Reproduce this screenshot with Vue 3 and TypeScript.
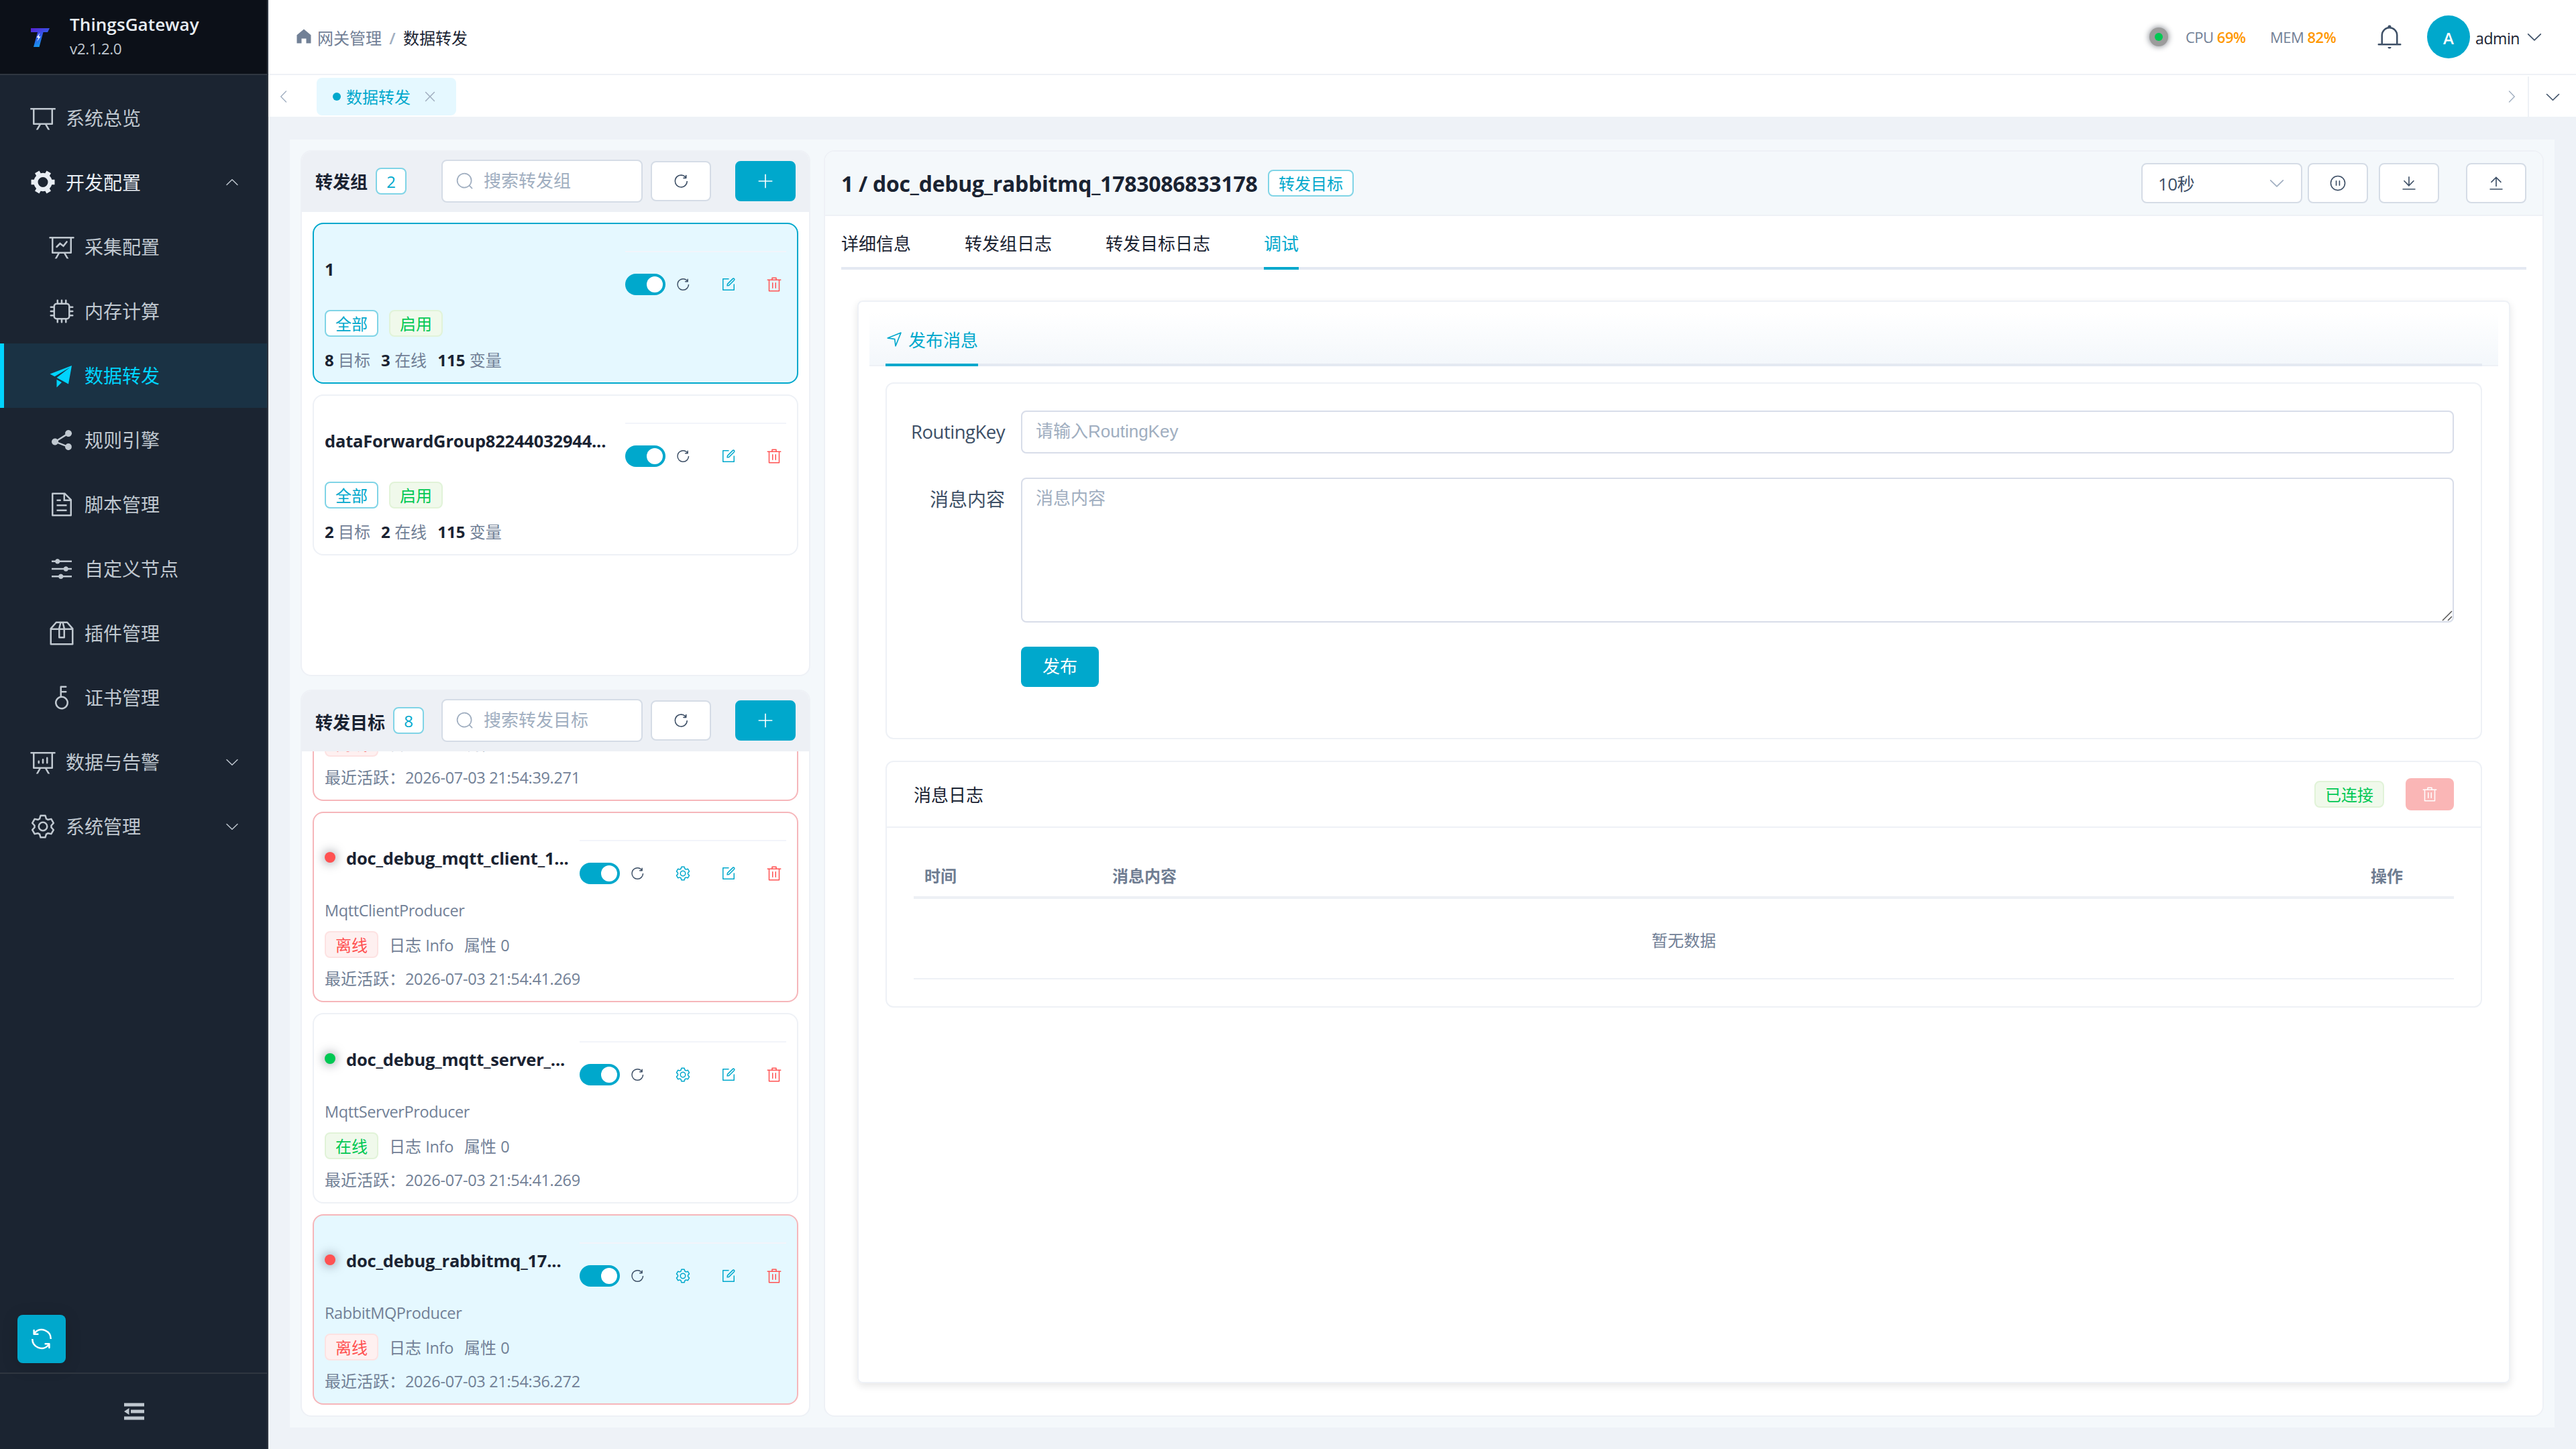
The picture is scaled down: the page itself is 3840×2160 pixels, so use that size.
<script setup lang="ts">
import { h, type FunctionalComponent } from 'vue'

const iconPaths: Record<string, string> = {
  dataBoard:
    'M32 128h960v64H32z M192 192v512h640V192zm-64-64h768v608a32 32 0 0 1-32 32H160a32 32 0 0 1-32-32z M322.176 960H248.32l144.64-250.56 55.424 32zm453.888 0h-73.856L576 741.44l55.424-32z',
  tools:
    'M764.416 254.72a351.68 351.68 0 0 1 86.336 149.184H960v192.064H850.752a351.68 351.68 0 0 1-86.336 149.312l54.72 94.72-166.272 96-54.592-94.72a352.64 352.64 0 0 1-172.48 0L371.136 936l-166.272-96 54.72-94.72a351.68 351.68 0 0 1-86.336-149.312H64v-192h109.248a351.68 351.68 0 0 1 86.336-149.312L204.8 160l166.208-96h.192l54.656 94.592a352.64 352.64 0 0 1 172.48 0L652.8 64h.128L819.2 160l-54.72 94.72zM704 499.968a192 192 0 1 0-384 0 192 192 0 0 0 384 0',
  dataLine:
    'M359.168 768H160a32 32 0 0 1-32-32V192H64a32 32 0 0 1 0-64h896a32 32 0 1 1 0 64h-64v544a32 32 0 0 1-32 32H665.216l110.848 192h-73.856L591.36 768H433.024L322.176 960H248.32zM832 192H192v512h640zM342.656 534.656a32 32 0 1 1-45.312-45.312L444.992 341.76l125.44 94.08L679.04 300.032a32 32 0 1 1 49.92 39.936L581.632 524.224 451.008 426.24z',
  cpu:
    'M320 256a64 64 0 0 0-64 64v384a64 64 0 0 0 64 64h384a64 64 0 0 0 64-64V320a64 64 0 0 0-64-64zm0-64h384a128 128 0 0 1 128 128v384a128 128 0 0 1-128 128H320a128 128 0 0 1-128-128V320a128 128 0 0 1 128-128 M512 64a32 32 0 0 1 32 32v128h-64V96a32 32 0 0 1 32-32m160 0a32 32 0 0 1 32 32v128h-64V96a32 32 0 0 1 32-32m-320 0a32 32 0 0 1 32 32v128h-64V96a32 32 0 0 1 32-32m160 896a32 32 0 0 1-32-32V800h64v128a32 32 0 0 1-32 32m160 0a32 32 0 0 1-32-32V800h64v128a32 32 0 0 1-32 32m-320 0a32 32 0 0 1-32-32V800h64v128a32 32 0 0 1-32 32M64 512a32 32 0 0 1 32-32h128v64H96a32 32 0 0 1-32-32m0-160a32 32 0 0 1 32-32h128v64H96a32 32 0 0 1-32-32m0 320a32 32 0 0 1 32-32h128v64H96a32 32 0 0 1-32-32m896-160a32 32 0 0 1-32 32H800v-64h128a32 32 0 0 1 32 32m0-160a32 32 0 0 1-32 32H800v-64h128a32 32 0 0 1 32 32m0 320a32 32 0 0 1-32 32H800v-64h128a32 32 0 0 1 32 32',
  promotion: 'm64 448 832-320-128 704-446.08-243.328L832 192 242.816 545.472zm256 512V657.024L512 768z',
  share:
    'm679.872 348.8-301.76 188.608a127.8 127.8 0 0 1 5.12 52.16l279.936 104.96a128 128 0 1 1-22.464 59.904l-279.872-104.96a128 128 0 1 1-16.64-166.272l301.696-188.608a128 128 0 1 1 33.92 54.272z',
  document:
    'M832 384H576V128H192v768h640zm-26.496-64L640 154.496V320zM160 64h480l256 256v608a32 32 0 0 1-32 32H160a32 32 0 0 1-32-32V96a32 32 0 0 1 32-32m160 448h384v64H320zm0-192h160v64H320zm0 384h384v64H320z',
  operation:
    'M389.44 768a96.064 96.064 0 0 1 181.12 0H896v64H570.56a96.064 96.064 0 0 1-181.12 0H128v-64zm192-288a96.064 96.064 0 0 1 181.12 0H896v64H762.56a96.064 96.064 0 0 1-181.12 0H128v-64zm-320-288a96.064 96.064 0 0 1 181.12 0H896v64H442.56a96.064 96.064 0 0 1-181.12 0H128v-64z',
  box:
    'M317.056 128 128 344.064V896h768V344.064L706.944 128zm-14.528-64h418.944a32 32 0 0 1 24.064 10.88l206.528 236.096A32 32 0 0 1 960 332.032V928a32 32 0 0 1-32 32H96a32 32 0 0 1-32-32V332.032a32 32 0 0 1 7.936-21.12L278.4 75.008A32 32 0 0 1 302.528 64 M64 320h896v64H64z M448 327.872V640h128V327.872L526.08 128h-28.16zM448 64h128l64 256v352a32 32 0 0 1-32 32H416a32 32 0 0 1-32-32V320z',
  key:
    'M448 456.064V96a32 32 0 0 1 32-32.064L672 64a32 32 0 0 1 0 64H512v128h160a32 32 0 0 1 0 64H512v128a256 256 0 1 1-64 8.064M512 896a192 192 0 1 0 0-384 192 192 0 0 0 0 384',
  dataAnalysis:
    'm665.216 768 110.848 192h-73.856L591.36 768H433.024L322.176 960H248.32l110.848-192H160a32 32 0 0 1-32-32V192H64a32 32 0 0 1 0-64h896a32 32 0 1 1 0 64h-64v544a32 32 0 0 1-32 32zM832 192H192v512h640zM352 448a32 32 0 0 1 32 32v64a32 32 0 0 1-64 0v-64a32 32 0 0 1 32-32m160-64a32 32 0 0 1 32 32v128a32 32 0 0 1-64 0V416a32 32 0 0 1 32-32m160-64a32 32 0 0 1 32 32v192a32 32 0 1 1-64 0V352a32 32 0 0 1 32-32',
  setting:
    'M600.704 64a32 32 0 0 1 30.464 22.208l35.2 109.376c14.784 7.232 28.928 15.36 42.432 24.512l112.384-24.192a32 32 0 0 1 34.432 15.36L944.32 364.8a32 32 0 0 1-4.032 37.504l-77.12 85.12a357 357 0 0 1 0 49.024l77.12 85.248a32 32 0 0 1 4.032 37.504l-88.704 153.6a32 32 0 0 1-34.432 15.296L708.8 803.904c-13.44 9.088-27.648 17.28-42.368 24.512l-35.264 109.376A32 32 0 0 1 600.704 960H423.296a32 32 0 0 1-30.464-22.208L357.696 828.48a352 352 0 0 1-42.56-24.64l-112.32 24.256a32 32 0 0 1-34.432-15.36L79.68 659.2a32 32 0 0 1 4.032-37.504l77.12-85.248a357 357 0 0 1 0-48.896l-77.12-85.248A32 32 0 0 1 79.68 364.8l88.704-153.6a32 32 0 0 1 34.432-15.296l112.32 24.256c13.568-9.152 27.776-17.408 42.56-24.64l35.2-109.312A32 32 0 0 1 423.232 64H600.64zm-23.424 64H446.72l-36.352 113.088-24.512 11.968a294 294 0 0 0-34.816 20.096l-22.656 15.36-116.224-25.088-65.28 113.152 79.68 88.192-1.92 27.136a293 293 0 0 0 0 40.192l1.92 27.136-79.808 88.192 65.344 113.152 116.224-25.024 22.656 15.296a294 294 0 0 0 34.816 20.096l24.512 11.968L446.72 896h130.688l36.48-113.152 24.448-11.904a288 288 0 0 0 34.752-20.096l22.592-15.296 116.288 25.024 65.28-113.152-79.744-88.192 1.92-27.136a293 293 0 0 0 0-40.256l-1.92-27.136 79.808-88.128-65.344-113.152-116.288 24.96-22.592-15.232a288 288 0 0 0-34.752-20.096l-24.448-11.904L577.344 128zM512 320a192 192 0 1 1 0 384 192 192 0 0 1 0-384m0 64a128 128 0 1 0 0 256 128 128 0 0 0 0-256',
  refresh:
    'M771.776 794.88A384 384 0 0 1 128 512h64a320 320 0 0 0 555.712 216.448H654.72a32 32 0 1 1 0-64h149.056a32 32 0 0 1 32 32v148.928a32 32 0 1 1-64 0v-50.56zM276.288 295.616h92.992a32 32 0 0 1 0 64H220.16a32 32 0 0 1-32-32V178.56a32 32 0 0 1 64 0v50.56A384 384 0 0 1 896.128 512h-64a320 320 0 0 0-555.776-216.384z',
  refreshRight:
    'M784.512 230.272v-50.56a32 32 0 1 1 64 0v149.056a32 32 0 0 1-32 32H667.52a32 32 0 1 1 0-64h92.992A320 320 0 1 0 524.8 833.152a320 320 0 0 0 320-320h64a384 384 0 0 1-384 384 384 384 0 0 1-384-384 384 384 0 0 1 643.712-282.88z',
  edit:
    'M832 512a32 32 0 1 1 64 0v352a32 32 0 0 1-32 32H160a32 32 0 0 1-32-32V160a32 32 0 0 1 32-32h352a32 32 0 0 1 0 64H192v640h640z M469.952 554.24l52.8-7.552L847.104 222.4a32 32 0 1 0-45.248-45.248L477.44 501.44l-7.552 52.8zm422.4-422.4a96 96 0 0 1 0 135.808l-331.84 331.84a32 32 0 0 1-18.112 9.088L436.8 623.68a32 32 0 0 1-36.224-36.224l15.104-105.6a32 32 0 0 1 9.024-18.112l331.904-331.84a96 96 0 0 1 135.744 0z',
  remove:
    'M160 256H96a32 32 0 0 1 0-64h256V95.936a32 32 0 0 1 32-32h256a32 32 0 0 1 32 32V192h256a32 32 0 1 1 0 64h-64v672a32 32 0 0 1-32 32H192a32 32 0 0 1-32-32zm448-64v-64H416v64zM224 896h576V256H224zm192-128a32 32 0 0 1-32-32V416a32 32 0 0 1 64 0v320a32 32 0 0 1-32 32m192 0a32 32 0 0 1-32-32V416a32 32 0 0 1 64 0v320a32 32 0 0 1-32 32',
  search:
    'm795.904 750.72 124.992 124.928a32 32 0 0 1-45.248 45.248L750.656 795.904a416 416 0 1 1 45.248-45.248zM480 832a352 352 0 1 0 0-704 352 352 0 0 0 0 704',
  plus: 'M480 480V128a32 32 0 0 1 64 0v352h352a32 32 0 1 1 0 64H544v352a32 32 0 1 1-64 0V544H128a32 32 0 0 1 0-64z',
  pause:
    'M512 64a448 448 0 1 1 0 896 448 448 0 0 1 0-896m0 832a384 384 0 0 0 0-768 384 384 0 0 0 0 768m-96-544q32 0 32 32v256q0 32-32 32t-32-32V384q0-32 32-32m192 0q32 0 32 32v256q0 32-32 32t-32-32V384q0-32 32-32',
  download:
    'M160 832h704a32 32 0 1 1 0 64H160a32 32 0 1 1 0-64m384-253.696 236.288-236.352 45.248 45.248L508.8 704 192 387.2l45.248-45.248L480 584.704V128h64z',
  upload:
    'M160 832h704a32 32 0 1 1 0 64H160a32 32 0 1 1 0-64m384-578.304V704h-64V247.296L237.248 490.048 192 444.8 508.8 128l316.8 316.8-45.312 45.248z',
  bell:
    'M512 64a64 64 0 0 1 64 64v64H448v-64a64 64 0 0 1 64-64 M256 768h512V448a256 256 0 1 0-512 0zm256-640a320 320 0 0 1 320 320v384H192V448a320 320 0 0 1 320-320 M96 768h832q32 0 32 32t-32 32H96q-32 0-32-32t32-32m352 128h128a64 64 0 0 1-128 0',
  home: 'M512 128 128 447.936V896h255.936V640H640v256h255.936V447.936z',
  arrow:
    'M831.872 340.864 512 652.672 192.128 340.864a30.59 30.59 0 0 0-42.752 0 29.12 29.12 0 0 0 0 41.6L489.664 714.24a32 32 0 0 0 44.672 0l340.288-331.712a29.12 29.12 0 0 0 0-41.728 30.59 30.59 0 0 0-42.752 0z',
  close:
    'M764.288 214.592 512 466.88 259.712 214.592a31.936 31.936 0 0 0-45.12 45.12L466.752 512 214.528 764.224a31.936 31.936 0 1 0 45.12 45.184L512 557.184l252.288 252.288a31.936 31.936 0 0 0 45.12-45.12L557.12 512.064l252.288-252.352a31.936 31.936 0 1 0-45.12-45.184z',
  position:
    'm249.6 417.088 319.744 43.072 39.168 310.272L845.12 178.88zm-129.024 47.168a32 32 0 0 1-7.68-61.44l777.792-311.04a32 32 0 0 1 41.6 41.6l-310.336 775.68a32 32 0 0 1-61.44-7.808L512 516.992z',
  fold: 'M896 192H128v128h768zm0 256H384v128h512zm0 256H128v128h768zM320 384 128 512l192 128z',
}

const Icon: FunctionalComponent<{ name: string; size: number }> = (props) =>
  h(
    'svg',
    { viewBox: '0 0 1024 1024', width: props.size, height: props.size, fill: 'currentColor', style: 'display:block;flex:none' },
    [h('path', { d: iconPaths[props.name] })],
  )
Icon.props = ['name', 'size']

interface MenuItem {
  icon: string
  label: string
  sub?: boolean
  active?: boolean
  opened?: boolean
  arrow?: 'up' | 'down'
}

const menu: MenuItem[] = [
  { icon: 'dataBoard', label: '系统总览' },
  { icon: 'tools', label: '开发配置', opened: true, arrow: 'up' },
  { icon: 'dataLine', label: '采集配置', sub: true },
  { icon: 'cpu', label: '内存计算', sub: true },
  { icon: 'promotion', label: '数据转发', sub: true, active: true },
  { icon: 'share', label: '规则引擎', sub: true },
  { icon: 'document', label: '脚本管理', sub: true },
  { icon: 'operation', label: '自定义节点', sub: true },
  { icon: 'box', label: '插件管理', sub: true },
  { icon: 'key', label: '证书管理', sub: true },
  { icon: 'dataAnalysis', label: '数据与告警', arrow: 'down' },
  { icon: 'setting', label: '系统管理', arrow: 'down' },
]

const groups = [
  { name: '1', targets: 8, online: 3, variables: 115, selected: true },
  { name: 'dataForwardGroup82244032944...', targets: 2, online: 2, variables: 115, selected: false },
]

const targets = [
  { name: 'doc_debug_mqtt_client_1...', producer: 'MqttClientProducer', online: false, time: '2026-07-03 21:54:39.271', selected: false },
  { name: 'doc_debug_mqtt_client_1...', producer: 'MqttClientProducer', online: false, time: '2026-07-03 21:54:41.269', selected: false },
  { name: 'doc_debug_mqtt_server_...', producer: 'MqttServerProducer', online: true, time: '2026-07-03 21:54:41.269', selected: false },
  { name: 'doc_debug_rabbitmq_17...', producer: 'RabbitMQProducer', online: false, time: '2026-07-03 21:54:36.272', selected: true },
]

const tabs = ['详细信息', '转发组日志', '转发目标日志', '调试']
</script>

<template>
  <div class="app">
    <aside class="sidebar">
      <div class="brand">
        <svg class="logo" viewBox="0 0 28 28" width="28" height="28">
          <defs>
            <linearGradient id="brandFill" x1="0" y1="0" x2="0.5" y2="1">
              <stop offset="0" stop-color="#5a1fd0" />
              <stop offset="0.5" stop-color="#3458e8" />
              <stop offset="1" stop-color="#12a0ee" />
            </linearGradient>
          </defs>
          <path d="M0 0h28l-3 6h-6.500L12.500 28H4L10 6H0z" fill="url(#brandFill)" />
          <path d="M13.500 7 8.500 14h3l-2.500 6 5.500-7.500h-3z" fill="#fff" />
        </svg>
        <div class="brand-text">
          <div class="brand-name">ThingsGateway</div>
          <div class="brand-version">v2.1.2.0</div>
        </div>
      </div>
      <nav class="menu">
        <div
          v-for="item in menu"
          :key="item.label"
          class="menu-item"
          :class="{ sub: item.sub, active: item.active, opened: item.opened }"
        >
          <span class="menu-icon"><Icon :name="item.icon" :size="40" /></span>
          <span class="menu-label">{{ item.label }}</span>
          <Icon v-if="item.arrow" class="menu-arrow" :class="item.arrow" name="arrow" :size="24" />
        </div>
      </nav>
      <div class="float-btn"><Icon name="refresh" :size="40" /></div>
      <div class="collapse"><Icon name="fold" :size="40" /></div>
    </aside>

    <div class="main">
      <header class="topbar">
        <div class="crumbs">
          <Icon class="home" name="home" :size="28" />
          <span class="crumb">网关管理</span>
          <span class="slash">/</span>
          <span class="crumb current">数据转发</span>
        </div>
        <div class="top-right">
          <span class="status"><i></i></span>
          <span class="metric cpu">CPU <b>69%</b></span>
          <span class="metric mem">MEM <b>82%</b></span>
          <Icon class="bell" name="bell" :size="40" />
          <span class="avatar">A</span>
          <span class="user">admin</span>
          <Icon class="user-arrow" name="arrow" :size="28" />
        </div>
      </header>

      <div class="tagbar">
        <Icon class="tag-prev" name="arrow" :size="24" />
        <div class="page-tag">
          <i class="page-dot"></i>
          <span>数据转发</span>
          <Icon class="page-close" name="close" :size="24" />
        </div>
        <Icon class="tag-next" name="arrow" :size="24" />
        <div class="tag-more"><Icon name="arrow" :size="27" /></div>
      </div>

      <div class="content">
        <div class="workspace">
          <div class="left">
            <section class="panel groups">
              <div class="panel-head">
                <span class="panel-title">转发组</span>
                <span class="tag primary count">2</span>
                <span class="spacer"></span>
                <span class="search"><Icon name="search" :size="28" /><span>搜索转发组</span></span>
                <span class="btn"><Icon name="refreshRight" :size="26" /></span>
                <span class="btn solid"><Icon name="plus" :size="26" /></span>
              </div>
              <div class="list">
                <article v-for="g in groups" :key="g.name" class="card" :class="{ selected: g.selected }">
                  <div class="card-head">
                    <span class="card-name">{{ g.name }}</span>
                    <div class="actions">
                      <span class="switch"><i></i></span>
                      <Icon class="act" name="refreshRight" :size="24" />
                      <Icon class="act blue" name="edit" :size="24" />
                      <Icon class="act red" name="remove" :size="24" />
                    </div>
                  </div>
                  <div class="tags">
                    <span class="tag primary">全部</span>
                    <span class="tag success">启用</span>
                  </div>
                  <div class="stats">
                    <span><b>{{ g.targets }}</b> 目标</span>
                    <span><b>{{ g.online }}</b> 在线</span>
                    <span><b>{{ g.variables }}</b> 变量</span>
                  </div>
                </article>
              </div>
            </section>

            <section class="panel targets">
              <div class="panel-head">
                <span class="panel-title low">转发目标</span>
                <span class="tag primary count">8</span>
                <span class="spacer"></span>
                <span class="search"><Icon name="search" :size="28" /><span>搜索转发目标</span></span>
                <span class="btn"><Icon name="refreshRight" :size="26" /></span>
                <span class="btn solid"><Icon name="plus" :size="26" /></span>
              </div>
              <div class="list scrolled">
                <article
                  v-for="(t, i) in targets"
                  :key="i"
                  class="card target"
                  :class="{ offline: !t.online, chosen: t.selected }"
                >
                  <div class="card-head">
                    <i class="dot" :class="{ on: t.online }"></i>
                    <span class="card-name">{{ t.name }}</span>
                    <div class="actions">
                      <span class="switch"><i></i></span>
                      <Icon class="act" name="refreshRight" :size="24" />
                      <Icon class="act blue" name="setting" :size="24" />
                      <Icon class="act blue" name="edit" :size="24" />
                      <Icon class="act red" name="remove" :size="24" />
                    </div>
                  </div>
                  <div class="producer">{{ t.producer }}</div>
                  <div class="meta">
                    <span class="tag" :class="t.online ? 'success' : 'danger'">{{ t.online ? '在线' : '离线' }}</span>
                    <span class="attr">日志 <em>Info</em></span>
                    <span class="attr">属性 <em>0</em></span>
                  </div>
                  <div class="seen">最近活跃：<em>{{ t.time }}</em></div>
                </article>
              </div>
            </section>
          </div>

          <section class="panel detail">
            <div class="detail-head">
              <h1>1 / doc_debug_rabbitmq_1783086833178</h1>
              <span class="tag primary">转发目标</span>
              <span class="spacer"></span>
              <span class="select"><span><em>10</em>秒</span><Icon name="arrow" :size="28" /></span>
              <span class="btn pause"><Icon name="pause" :size="26" /></span>
              <span class="btn down"><Icon name="download" :size="26" /></span>
              <span class="btn up"><Icon name="upload" :size="26" /></span>
            </div>
            <div class="tabs">
              <span v-for="t in tabs" :key="t" class="tab" :class="{ active: t === '调试' }">{{ t }}</span>
            </div>
            <div class="debug">
              <div class="debug-head">
                <div class="tabs inner">
                  <span class="tab active"><Icon class="tab-icon" name="position" :size="26" />发布消息</span>
                </div>
              </div>
              <div class="box form">
                <div class="row">
                  <label class="latin">RoutingKey</label>
                  <div class="input">请输入RoutingKey</div>
                </div>
                <div class="row">
                  <label>消息内容</label>
                  <div class="input area">
                    消息内容
                    <svg class="grip" viewBox="0 0 16 16" width="16" height="16" stroke="#555" stroke-width="1.500" fill="none">
                      <path d="M1 15 15 1M9 15l6-6" />
                    </svg>
                  </div>
                </div>
                <div class="submit">发布</div>
              </div>
              <div class="box log">
                <div class="log-head">
                  <span class="log-title">消息日志</span>
                  <span class="spacer"></span>
                  <span class="tag success">已连接</span>
                  <span class="clear"><Icon name="remove" :size="24" /></span>
                </div>
                <div class="table">
                  <div class="thead">
                    <span class="c-time">时间</span>
                    <span class="c-body">消息内容</span>
                    <span class="c-op">操作</span>
                  </div>
                  <div class="empty">暂无数据</div>
                </div>
              </div>
            </div>
          </section>
        </div>
      </div>
    </div>
  </div>
</template>

<style>
body {
  margin: 0;
  background: #eef2f7;
}
</style>

<style scoped>
.app {
  display: flex;
  width: 3840px;
  height: 2160px;
  overflow: hidden;
  font-family: 'Open Sans', 'Noto Sans CJK SC', sans-serif;
  font-size: 24px;
  line-height: 36px;
  color: #1a2332;
  background: #eef2f7;
}
.app * {
  box-sizing: border-box;
}
em {
  font-style: normal;
}
.spacer {
  flex: 1;
}

/* sidebar */
.sidebar {
  flex: none;
  display: flex;
  flex-direction: column;
  width: 400px;
  border-right: 2px solid #2f3640;
  background: #1b2431;
  color: #c0c8d0;
}
.brand {
  display: flex;
  align-items: center;
  height: 112px;
  padding-left: 46px;
  border-bottom: 2px solid #2f3640;
  background: #0c1018;
}
.brand-text {
  margin: -2px 0 0 30px;
}
.logo {
  margin-top: 2px;
}
.brand-name {
  font-size: 26px;
  font-weight: 600;
  line-height: 38px;
  letter-spacing: 0.1px;
  color: #e8edf3;
}
.brand-version {
  font-size: 22.5px;
  line-height: 36px;
  letter-spacing: -0.4px;
}
.menu {
  padding-top: 16px;
  flex: 1;
}
.menu-item {
  display: flex;
  align-items: center;
  height: 96px;
  padding-left: 40px;
  font-size: 28px;
}
.menu-item.sub {
  padding-left: 68px;
}
.menu-item.opened {
  color: #e8edf3;
}
.menu-item.active {
  padding-left: 62px;
  border-left: 6px solid #00d4ff;
  background: #1a3244;
  color: #00d4ff;
}
.menu-icon {
  display: flex;
  justify-content: center;
  width: 48px;
  margin-right: 10px;
}
.menu-arrow {
  margin-left: auto;
  margin-right: 40px;
  color: #c0c8d0;
}
.menu-arrow.up {
  transform: rotate(180deg);
}
.float-btn {
  display: flex;
  align-items: center;
  justify-content: center;
  width: 72px;
  height: 72px;
  margin: 0 0 14px 26px;
  border-radius: 8px;
  background: #00a8cc;
  color: #fff;
  box-shadow: 0 4px 24px rgba(0, 0, 0, 0.15);
}
.collapse {
  display: flex;
  align-items: center;
  justify-content: center;
  height: 114px;
  padding-left: 2px;
  border-top: 2px solid #2f3640;
}

/* top bar */
.main {
  flex: 1;
  display: flex;
  flex-direction: column;
  min-width: 0;
}
.topbar {
  display: flex;
  align-items: center;
  justify-content: space-between;
  height: 112px;
  border-bottom: 2px solid #eef1f6;
  background: #fff;
}
.crumbs {
  display: flex;
  align-items: center;
  padding: 4px 0 0 39px;
  color: #718096;
}
.home {
  margin: -6px 6px 0 0;
}
.slash {
  width: 32px;
  text-align: center;
  color: #a0aec0;
  font-weight: 600;
}
.current {
  color: #1a2332;
}
.top-right {
  display: flex;
  align-items: center;
  padding-right: 48px;
  color: #3d4f66;
}
.status {
  display: flex;
  align-items: center;
  justify-content: center;
  width: 28px;
  height: 28px;
  border-radius: 50%;
  background: #9c9c9c;
  box-shadow: 0 0 8px 1px #8e9299;
}
.status i {
  width: 12px;
  height: 12px;
  border-radius: 50%;
  background: #00c853;
}
.metric {
  font-size: 22px;
  letter-spacing: -0.5px;
  color: #718096;
  white-space: nowrap;
}
.metric b {
  font-weight: 600;
  color: #ff9800;
}
.cpu {
  width: 90px;
  margin-left: 26px;
}
.mem {
  width: 98px;
  margin-left: 36px;
}
.bell {
  margin-left: 60px;
}
.avatar {
  width: 64px;
  height: 64px;
  margin-left: 36px;
  border-radius: 50%;
  background: #00a8cc;
  color: #fff;
  font-size: 24px;
  font-weight: 600;
  line-height: 67px;
  text-align: center;
}
.user {
  width: 66px;
  margin: 3px 0 0 8px;
  font-size: 23px;
  letter-spacing: -0.4px;
  color: #1a2332;
}
.user-arrow {
  margin-left: 8px;
}

/* page tags */
.tagbar {
  display: flex;
  align-items: center;
  height: 62px;
  padding-top: 1px;
  background: #fff;
}
.tag-prev {
  margin-left: 11px;
  transform: rotate(90deg);
  color: #a0aec0;
}
.page-tag {
  display: flex;
  align-items: center;
  width: 208px;
  height: 56px;
  margin-left: 37px;
  padding-left: 24px;
  border-radius: 8px;
  background: #e5f8ff;
  color: #00a8cc;
}
.page-tag span {
  padding-top: 3px;
}
.page-dot {
  width: 12px;
  height: 12px;
  margin-right: 8px;
  border-radius: 50%;
  background: #00a8cc;
}
.page-close {
  margin-left: 17px;
  color: #a0aec0;
}
.tag-next {
  margin-left: auto;
  margin-right: 12px;
  transform: rotate(-90deg);
  color: #a0aec0;
}
.tag-more {
  align-self: flex-end;
  display: flex;
  align-items: center;
  justify-content: center;
  width: 72px;
  height: 60px;
  border-left: 2px solid #eef1f6;
  color: #3d4f66;
}

/* workspace */
.content {
  flex: 1;
  padding: 34px 32px 32px;
  min-height: 0;
}
.workspace {
  display: flex;
  gap: 20px;
  height: 1920px;
  padding: 16px;
  background: #f4f8fb;
}
.left {
  flex: none;
  display: flex;
  flex-direction: column;
  gap: 20px;
  width: 760px;
}
.panel {
  display: flex;
  flex-direction: column;
  overflow: hidden;
  border: 2px solid #eef1f6;
  border-radius: 16px;
  background: #fff;
}
.groups {
  height: 784px;
}
.targets {
  height: 1084px;
}
.panel-head {
  flex: none;
  display: flex;
  align-items: center;
  height: 90px;
  padding: 0 20px 2px;
  background: #edf0f5;
}
.panel-title {
  margin-right: 12px;
  padding-top: 1px;
  font-size: 26px;
  font-weight: 700;
}
.panel-title.low {
  padding-top: 6px;
}
.tag {
  flex: none;
  height: 40px;
  padding: 0 14px;
  border: 2px solid;
  border-radius: 8px;
  font-size: 24px;
  line-height: 38px;
  text-align: center;
}
.tag.primary {
  border-color: #80d4e6;
  background: #fff;
  color: #00a8cc;
}
.tag.success {
  border-color: #e1f3d8;
  background: #f0f9eb;
  color: #00c853;
}
.tag.danger {
  border-color: #fde2e2;
  background: #fef0f0;
  color: #ff5252;
}
.tag.count {
  width: 46px;
  padding: 0;
  line-height: 37px;
}
.search {
  display: flex;
  align-items: center;
  width: 300px;
  height: 64px;
  padding-left: 19px;
  border: 2px solid #d5dce6;
  border-radius: 8px;
  background: #fff;
  font-size: 26px;
  color: #a0aec0;
}
.search span {
  margin: -3px 0 0 14px;
}
.btn {
  display: flex;
  align-items: center;
  justify-content: center;
  width: 90px;
  height: 60px;
  margin-left: 12px;
  border: 2px solid #d5dce6;
  border-radius: 8px;
  background: #fff;
  color: #3d4f66;
}
.btn.solid {
  margin-left: 36px;
  border-color: #00a8cc;
  background: #00a8cc;
  color: #fff;
}
.list {
  flex: 1;
  min-height: 0;
  display: flex;
  flex-direction: column;
  gap: 16px;
  padding: 16px;
  overflow: hidden;
}
.scrolled {
  justify-content: flex-end;
}
.card {
  flex: none;
  height: 240px;
  padding: 0 16px;
  border: 2px solid #eef1f6;
  border-radius: 16px;
  background: #fff;
}
.card.target {
  height: 284px;
}
.card.selected {
  border-color: #00a8cc;
  background: #e5f8ff;
}
.card.offline {
  border-color: #f6b6ba;
}
.card.chosen {
  background: #e5f8ff;
}
.card-head {
  display: flex;
  align-items: center;
  height: 128px;
}
.card-name {
  padding-top: 5px;
  font-size: 25.5px;
  font-weight: 700;
  letter-spacing: -0.2px;
  white-space: nowrap;
}
.dot {
  flex: none;
  width: 16px;
  height: 16px;
  margin: 4px 16px 0 0;
  border-radius: 50%;
  background: #ff5252;
  box-shadow: 0 0 16px rgba(26, 35, 50, 0.6);
}
.dot.on {
  background: #00c853;
}
.actions {
  flex: none;
  display: flex;
  align-items: center;
  align-self: flex-start;
  gap: 44px;
  margin: 40px 0 0 auto;
  padding: 32px 6px 0 0;
  border-top: 2px solid #f2f4fa;
}
.switch {
  display: flex;
  align-items: center;
  justify-content: flex-end;
  width: 60px;
  height: 32px;
  margin-right: -30px;
  padding-right: 4px;
  border-radius: 16px;
  background: #00a8cc;
}
.switch i {
  width: 24px;
  height: 24px;
  border-radius: 50%;
  background: #fff;
}
.act {
  color: #3d4f66;
}
.blue {
  color: #00a8cc;
}
.red {
  color: #ff5252;
}
.tags {
  display: flex;
  gap: 16px;
}
.stats {
  display: flex;
  gap: 16px;
  margin-top: 17px;
  color: #718096;
}
.stats b {
  font-size: 24px;
  letter-spacing: 0.1px;
  color: #1a2332;
}
.producer {
  font-size: 23.5px;
  line-height: 34px;
  letter-spacing: -0.4px;
  color: #718096;
}
.meta {
  display: flex;
  align-items: center;
  gap: 16px;
  margin-top: 14px;
  color: #718096;
}
.attr {
  padding-top: 2px;
}
.seen {
  margin-top: 13px;
  color: #718096;
}
.meta em,
.seen em {
  font-size: 23.5px;
  letter-spacing: -0.32px;
}

/* detail */
.detail {
  flex: 1;
  min-width: 0;
}
.detail-head {
  flex: none;
  display: flex;
  align-items: center;
  height: 96px;
  padding: 0 24px;
  border-bottom: 2px solid #eef1f6;
  background: #f4f8fb;
}
h1 {
  width: 620px;
  margin: 0 16px 0 0;
  padding-top: 2px;
  font-size: 32px;
  font-weight: 700;
  letter-spacing: -0.27px;
  line-height: 40px;
  white-space: nowrap;
}
.select {
  display: flex;
  align-items: center;
  justify-content: space-between;
  width: 240px;
  height: 60px;
  padding: 0 22px 0 23px;
  border: 2px solid #d5dce6;
  border-radius: 8px;
  background: #fff;
  font-size: 26px;
  color: #3d4f66;
}
.select span {
  padding-top: 1px;
}
.select em {
  letter-spacing: -0.6px;
}
.select svg {
  color: #a0aec0;
}
.btn.pause {
  margin-left: 8px;
}
.btn.down {
  margin-left: 16px;
}
.btn.up {
  margin-left: 40px;
}
.tabs {
  flex: none;
  display: flex;
  gap: 80px;
  height: 80px;
  margin: 0 24px;
  border-bottom: 4px solid #e4e9f2;
  font-size: 26px;
}
.tab {
  display: flex;
  align-items: center;
  gap: 8px;
  height: 80px;
  padding-top: 5px;
  border-bottom: 4px solid transparent;
}
.tab.active {
  border-bottom-color: #00a8cc;
  color: #00a8cc;
}
.tab-icon {
  margin-top: -1px;
}
.debug {
  height: 1614px;
  margin: 46px 48px 0;
  padding: 16px;
  border: 2px solid #eef1f6;
  border-radius: 8px;
  box-shadow: 0 4px 12px rgba(0, 0, 0, 0.1);
}
.debug-head {
  height: 80px;
  background: linear-gradient(#fff, #f3f7fb);
  box-shadow: inset 0 -2px #eef1f6;
}
.box {
  margin: 0 24px;
  border: 2px solid #eef1f6;
  border-radius: 12px;
}
.form {
  height: 532px;
  margin-top: 24px;
  padding: 40px 40px 0 0;
}
.row {
  display: flex;
  margin-bottom: 36px;
}
.row label {
  width: 200px;
  padding-right: 24px;
  font-size: 28px;
  line-height: 64px;
  text-align: right;
  color: #3d4f66;
}
.row label.latin {
  font-size: 27.5px;
  letter-spacing: -0.5px;
}
.input {
  position: relative;
  flex: 1;
  height: 64px;
  padding-left: 20px;
  border: 2px solid #d8dde9;
  border-radius: 8px;
  font-family: 'Liberation Sans', 'Noto Sans CJK SC', sans-serif;
  font-size: 26px;
  line-height: 59px;
  color: #a0aec0;
}
.area {
  height: 216px;
}
.grip {
  position: absolute;
  right: 0;
  bottom: 0;
}
.submit {
  width: 116px;
  height: 60px;
  margin-left: 200px;
  border-radius: 8px;
  background: #00a8cc;
  color: #fff;
  font-size: 26px;
  line-height: 58px;
  text-align: center;
}
.log {
  height: 368px;
  margin-top: 32px;
}
.log-head {
  display: flex;
  align-items: center;
  height: 98px;
  padding: 0 40px;
  border-bottom: 2px solid #eef1f6;
}
.log-title {
  padding-top: 2px;
  font-size: 26px;
}
.clear {
  display: flex;
  align-items: center;
  justify-content: center;
  width: 72px;
  height: 48px;
  margin-left: 32px;
  border-radius: 8px;
  background: #fab6b6;
  color: #fff;
}
.table {
  margin: 40px 40px 0;
}
.thead {
  display: flex;
  height: 66px;
  border-bottom: 4px solid #edf0f5;
  font-weight: 700;
  line-height: 64px;
  color: #6f7d92;
}
.c-time {
  width: 280px;
  padding-left: 16px;
}
.c-body {
  flex: 1;
  padding-left: 16px;
}
.c-op {
  width: 124px;
}
.empty {
  height: 120px;
  border-bottom: 2px solid #eef1f6;
  line-height: 124px;
  text-align: center;
  color: #718096;
}
</style>
